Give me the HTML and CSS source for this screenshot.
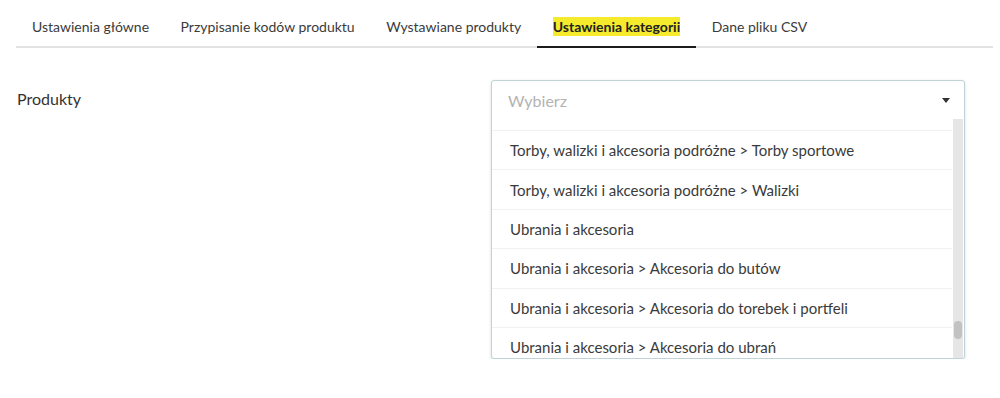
FILE: index.html
```html
<!DOCTYPE html>
<html lang="pl">
<head>
    <meta charset="UTF-8">
    <meta name="viewport" content="width=device-width, initial-scale=1.0">
    <title>Ustawienia kategorii</title>
    <link rel="stylesheet" href="styles.css">
</head>
<body>
    <div class="page">
        <ul class="tabs">
            <li class="tab">Ustawienia główne</li>
            <li class="tab">Przypisanie kodów produktu</li>
            <li class="tab">Wystawiane produkty</li>
            <li class="tab active"><mark>Ustawienia kategorii</mark></li>
            <li class="tab">Dane pliku CSV</li>
        </ul>

        <div class="form-row">
            <label class="form-label">Produkty</label>
            <div class="select open">
                <div class="select-head">
                    <span class="placeholder">Wybierz</span>
                    <span class="caret"></span>
                </div>
                <div class="select-list">
                    <ul class="options">
                        <li>Torby, walizki i akcesoria podróżne &gt; Torby sportowe</li>
                        <li>Torby, walizki i akcesoria podróżne &gt; Walizki</li>
                        <li>Ubrania i akcesoria</li>
                        <li>Ubrania i akcesoria &gt; Akcesoria do butów</li>
                        <li>Ubrania i akcesoria &gt; Akcesoria do torebek i portfeli</li>
                        <li>Ubrania i akcesoria &gt; Akcesoria do ubrań</li>
                    </ul>
                    <div class="scroll-track"><div class="scroll-thumb"></div></div>
                </div>
            </div>
        </div>
    </div>
</body>
</html>
```

FILE: styles.css
```css
body {
    margin: 0;
    font-family: 'Lato', 'Open Sans', sans-serif;
    color: #333;
    background: #fff;
}
.page {
    padding: 0 7px 0 16px;
}
.tabs {
    display: flex;
    list-style: none;
    margin: 0;
    padding: 0;
    border-bottom: 2px solid #e2e2e2;
}
.tab {
    padding: 17px 15.5px 9px 16px;
    font-size: 14px;
    line-height: 20px;
    color: #3b3b3b;
    margin-bottom: -2px;
    border-bottom: 2px solid transparent;
}
.tab.active {
    border-bottom-color: #1c1c1c;
    font-weight: 700;
    color: #222;
}
.tab mark {
    background: #f6ea2c;
    color: inherit;
    padding: 1px 0;
}
.form-row {
    display: grid;
    grid-template-columns: 475px 474px;
    margin-top: 32px;
}
.form-label {
    font-size: 16px;
    line-height: 20px;
    padding: 9px 0 0 1px;
    color: #333;
}
.select {
    border: 1px solid #bfd3d8;
    border-radius: 3px;
    box-shadow: 0 1px 3px rgba(0,0,0,0.15);
    background: #fff;
}
.select-head {
    display: flex;
    align-items: center;
    justify-content: space-between;
    height: 38px;
    padding: 0 14px 0 16px;
}
.placeholder {
    font-size: 16px;
    color: #b3b3b3;
}
.caret {
    width: 0;
    height: 0;
    border-left: 4px solid transparent;
    border-right: 4px solid transparent;
    border-top: 5px solid #333;
}
.select-list {
    position: relative;
    height: 239px;
    overflow: hidden;
}
.options {
    list-style: none;
    margin: 0;
    padding: 11px 12px 0 0;
}
.options li {
    box-sizing: border-box;
    height: 39.4px;
    padding: 0 0 0 18px;
    display: flex;
    align-items: center;
    border-top: 1px solid #f1f1f1;
    font-size: 15px;
    color: #3a3a3a;
    white-space: nowrap;
}
.scroll-track {
    position: absolute;
    top: 0;
    right: 1px;
    bottom: 0;
    width: 10px;
    background: #e6e6e6;
}
.scroll-thumb {
    position: absolute;
    left: 1px;
    right: 1px;
    top: 202px;
    height: 18px;
    border-radius: 4px;
    background: #c2c2c2;
}
```
